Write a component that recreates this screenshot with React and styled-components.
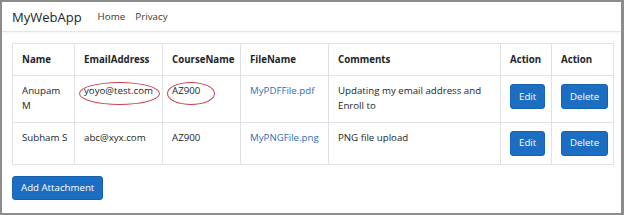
import React from 'react';
import styled, { createGlobalStyle } from 'styled-components';

const Global = createGlobalStyle`
  html, body { margin: 0; padding: 0; background: #fff; }
  body { font-family: "Open Sans", "Noto Sans", sans-serif; color: #212529; }
`;

const Frame = styled.div`
  width: 624px;
  height: 215px;
  box-sizing: border-box;
  border: 2px solid #8c8c8c;
  border-right-width: 3px;
  background: #fff;
  overflow: hidden;
`;

const Nav = styled.div`
  height: 29px;
  display: flex;
  align-items: center;
  padding-left: 10px;
  border-bottom: 1px solid #e5e5e5;
  box-shadow: 0 1px 3px rgba(0, 0, 0, 0.05);
`;

const Brand = styled.span`
  font-size: 13px;
  color: #212529;
  margin-right: 16px;
`;

const NavLink = styled.span`
  font-size: 9.8px;
  color: #3a3a3a;
  margin-right: 10px;
`;

const Main = styled.div`
  padding: 11px 0 0 10px;
`;

const Table = styled.table`
  border-collapse: collapse;
  width: 601px;
  table-layout: fixed;
  font-size: 9.7px;
  line-height: 14.5px;
`;

const Th = styled.th`
  text-align: left;
  font-weight: 700;
  padding: 8.5px 6px 8px 9px;
  border: 1px solid #dee2e6;
  vertical-align: top;
`;

const Td = styled.td`
  padding: 8px 6px 8.5px 9px;
  border: 1px solid #dee2e6;
  vertical-align: top;
  position: relative;
`;

const FileLink = styled.a`
  color: #2f6db8;
  text-decoration: none;
`;

const Button = styled.button`
  display: block;
  font-family: inherit;
  font-size: 9.7px;
  line-height: 14px;
  color: #fff;
  background: #1b6ec2;
  border: 1px solid #1861ac;
  border-radius: 3px;
  padding: 4.5px 8px;
  cursor: pointer;
`;

const AddButton = styled(Button)`
  margin-top: 11px;
  padding: 4px 8px;
`;

const Circle = styled.span`
  position: absolute;
  left: 4px;
  top: 6px;
  width: ${p => p.$w}px;
  height: 21px;
  border: 1px solid #c8434f;
  border-radius: 50%;
  pointer-events: none;
`;

const widths = [62, 88, 78, 88, 172, 51, 62];
const heads = ['Name', 'EmailAddress', 'CourseName', 'FileName', 'Comments', 'Action', 'Action'];

const rows = [
  { name: 'Anupam M', email: 'yoyo@test.com', course: 'AZ900', file: 'MyPDFFile.pdf', comment: 'Updating my email address and Enroll to', marked: true },
  { name: 'Subham S', email: 'abc@xyx.com', course: 'AZ900', file: 'MyPNGFile.png', comment: 'PNG file upload' },
];

export default function App() {
  return (
    <>
      <Global />
      <Frame>
        <Nav>
          <Brand>MyWebApp</Brand>
          <NavLink>Home</NavLink>
          <NavLink>Privacy</NavLink>
        </Nav>
        <Main>
          <Table>
            <colgroup>
              {widths.map((w, i) => <col key={i} style={{ width: w }} />)}
            </colgroup>
            <thead>
              <tr>{heads.map((h, i) => <Th key={i}>{h}</Th>)}</tr>
            </thead>
            <tbody>
              {rows.map((r, i) => (
                <tr key={i}>
                  <Td>{r.name}</Td>
                  <Td>{r.email}{r.marked && <Circle $w={79} />}</Td>
                  <Td>{r.course}{r.marked && <Circle $w={46} />}</Td>
                  <Td><FileLink href="#">{r.file}</FileLink></Td>
                  <Td>{r.comment}</Td>
                  <Td><Button>Edit</Button></Td>
                  <Td><Button>Delete</Button></Td>
                </tr>
              ))}
            </tbody>
          </Table>
          <AddButton>Add Attachment</AddButton>
        </Main>
      </Frame>
    </>
  );
}
